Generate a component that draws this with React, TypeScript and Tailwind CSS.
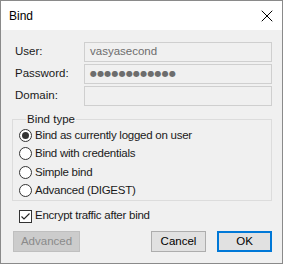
import { X } from 'lucide-react';

const font = { fontFamily: '"Liberation Sans", Arial, sans-serif' };

function Field({ label, value, password }: { label: string; value?: string; password?: boolean }) {
  return (
    <div className="flex items-center h-[20px]">
      <span className="w-[83px] shrink-0 pl-[14px] text-[11.5px] text-[#1a1a1a]">{label}</span>
      <div className="flex-1 h-[20px] border border-[#cfcfcf] bg-[#f0f0f0] flex items-center pl-[5px] text-[11.5px] text-[#6d6d6d]">
        {password ? (
          <span className="text-[8px] tracking-[0.2px] font-['DejaVu_Sans'] leading-none">●●●●●●●●●●●●</span>
        ) : (
          value
        )}
      </div>
    </div>
  );
}

function Radio({ label, checked }: { label: string; checked?: boolean }) {
  return (
    <div className="flex items-center h-[18.5px]">
      <span className="w-[13px] h-[13px] rounded-full border border-[#333] bg-white flex items-center justify-center">
        {checked && <span className="w-[7px] h-[7px] rounded-full bg-[#333]" />}
      </span>
      <span className="ml-[3px] text-[11.5px] tracking-[-0.25px] text-[#1a1a1a]">{label}</span>
    </div>
  );
}

export default function App() {
  return (
    <div style={font} className="w-[283px] h-[264px] border border-[#8a8a8a] bg-[#f0f0f0] flex flex-col select-none">
      {/* title bar */}
      <div className="h-[29px] bg-white flex items-center justify-between pl-[8px] pr-[5px]">
        <span className="text-[12px] text-black">Bind</span>
        <X size={20} strokeWidth={1.2} className="text-black" />
      </div>

      <div className="flex flex-col pr-[10px] pt-[12px]">
        <div className="flex flex-col gap-[2px]">
          <Field label="User:" value="vasyasecond" />
          <Field label="Password:" password />
          <Field label="Domain:" />
        </div>

        <fieldset className="ml-[11px] mt-[6px] border border-[#dcdcdc] h-[89px] pl-[6px]">
          <legend className="ml-[7px] px-[1px] text-[11.5px] text-[#1a1a1a] leading-[14px]">Bind type</legend>
          <div className="flex flex-col">
            <Radio label="Bind as currently logged on user" checked />
            <Radio label="Bind with credentials" />
            <Radio label="Simple bind" />
            <Radio label="Advanced (DIGEST)" />
          </div>
        </fieldset>

        <div className="flex items-center ml-[18px] mt-[7px] h-[16px]">
          <span className="w-[13px] h-[13px] border border-[#333] bg-white flex items-center justify-center">
            <svg width="11" height="11" viewBox="0 0 11 11">
              <path d="M1.5 5.5 L4 8 L9.5 2.5" fill="none" stroke="#222" strokeWidth="1.1" />
            </svg>
          </span>
          <span className="ml-[3px] text-[11.5px] tracking-[-0.25px] text-[#1a1a1a]">Encrypt traffic after bind</span>
        </div>

        <div className="flex items-center mt-[7px] ml-[12px]">
          <button className="w-[67px] h-[21px] bg-[#cccccc] border border-[#bfbfbf] text-[11.5px] text-[#8a8a8a]" disabled>
            Advanced
          </button>
          <button className="ml-auto w-[55px] h-[21px] bg-[#e1e1e1] border border-[#adadad] text-[11.5px] text-black">
            Cancel
          </button>
          <button className="ml-[11px] w-[55px] h-[21px] bg-[#e1e1e1] border-2 border-[#0078d7] text-[11.5px] text-black">
            OK
          </button>
        </div>
      </div>
    </div>
  );
}
